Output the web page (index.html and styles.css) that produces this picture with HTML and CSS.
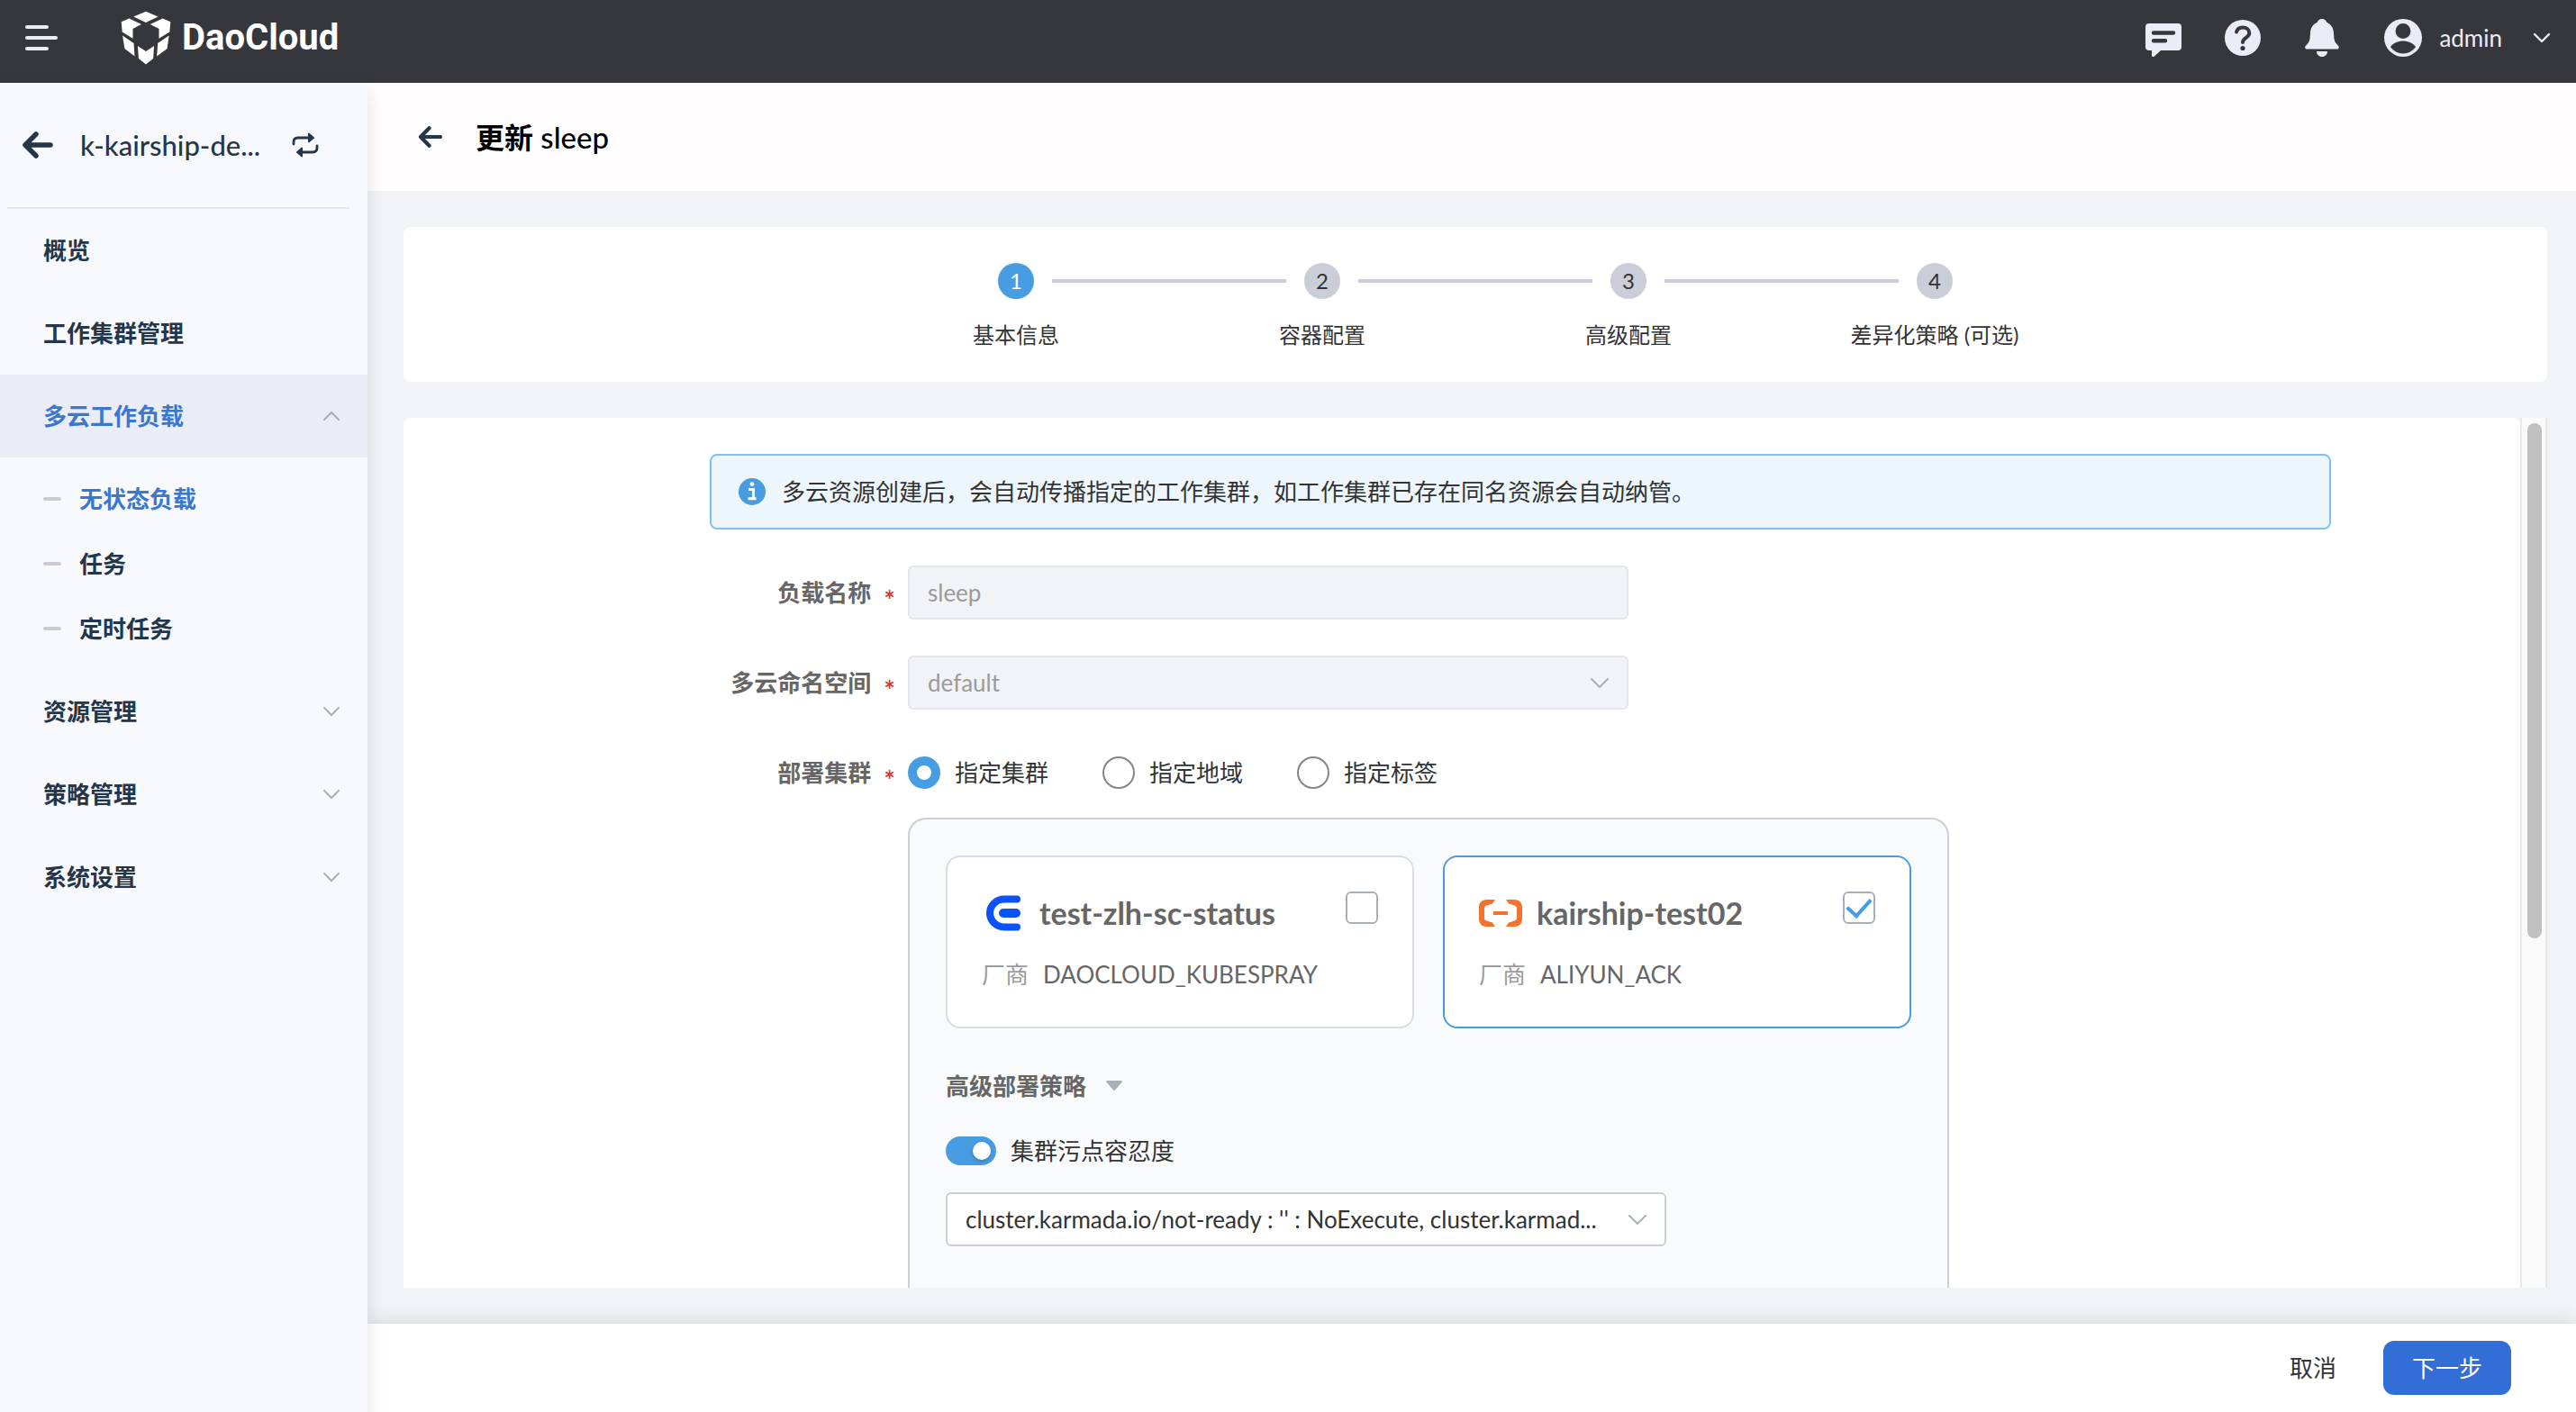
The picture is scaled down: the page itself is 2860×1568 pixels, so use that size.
FILE: index.html
```html
<!DOCTYPE html>
<html lang="zh-CN">

<head>
    <meta charset="UTF-8" />
    <meta name="viewport" content="width=device-width, initial-scale=1.0" />
    <title>更新 sleep - DaoCloud</title>
    <link rel="stylesheet" href="styles.css">
</head>

<body>
    <header class="topbar">
        <button type="button" class="icon-btn menu-btn" aria-label="菜单">
            <svg width="36" height="28" viewBox="0 0 36 28" fill="#eaedf5">
                <rect width="26" height="4" rx="2" />
                <rect y="12" width="36" height="4" rx="2" />
                <rect y="24" width="26" height="4" rx="2" />
            </svg>
        </button>
        <a class="logo" href="#">
            <svg width="56" height="60" viewBox="402 36 166 177" fill="#fff">
                <path d="M485 38l40 17-40 19-41-19z" />
                <path d="M404 72l26-11 40 19-28 15v32l-35-22z" />
                <path d="M566 72l-26-11-41 19 29 15v32l35-22z" />
                <path d="M408 117l37 25 3 43-33-25z" />
                <path d="M561 117l-37 25-3 43 34-25z" />
                <path d="M458 151l27 18 27-18-3 42-24 19-24-19z" />
            </svg>
            <span>DaoCloud</span>
        </a>
        <div class="tools">
            <button type="button" class="icon-btn" aria-label="消息">
                <svg width="48" height="48" viewBox="0 0 48 48">
                    <path fill="#eaedf5" d="M8 8h32a4 4 0 0 1 4 4v22a4 4 0 0 1-4 4H21l-7 6.400c-1.500 1.200-3 .6-3-1V38H8a4 4 0 0 1-4-4V12a4 4 0 0 1 4-4z" />
                    <path stroke="#36373c" stroke-width="4.400" stroke-linecap="round" d="M13 18.500h22M13 27.200h13" />
                </svg>
            </button>
            <button type="button" class="icon-btn" aria-label="帮助">
                <svg width="48" height="48" viewBox="0 0 48 48">
                    <circle cx="24" cy="24" r="20" fill="#eaedf5" />
                    <path fill="none" stroke="#36373c" stroke-width="4" stroke-linecap="round" d="M17 17.500c1-3.500 4-5 7-5 4 0 7.300 2.300 7.300 6.300 0 5-7.300 5-7.300 10.200" />
                    <circle cx="24" cy="35.500" r="2.600" fill="#36373c" />
                </svg>
            </button>
            <button type="button" class="icon-btn" aria-label="通知">
                <svg width="48" height="48" viewBox="0 0 48 48" fill="#eaedf5">
                    <path d="M24 3c2.600 0 4.600 1.600 5.200 3.800 5 2.200 7.600 6.400 7.800 12.200.2 6 .8 9 2.600 11l2.600 3c1.300 1.600.5 3.500-1.500 3.500H7.300c-2 0-2.800-1.900-1.500-3.500l2.600-3c1.800-2 2.400-5 2.600-11 .2-5.800 2.800-10 7.800-12.200C19.400 4.600 21.400 3 24 3z" />
                    <path d="M18 39h12c0 3.600-2.600 6-6 6s-6-2.400-6-6z" />
                </svg>
            </button>
            <button type="button" class="icon-btn user">
                <svg width="48" height="48" viewBox="0 0 48 48">
                    <circle cx="24" cy="24" r="21" fill="#eaedf5" />
                    <circle cx="24" cy="16.500" r="8.400" fill="#36373c" />
                    <path fill="#36373c" d="M10 34c3-4.200 8.300-6.400 14-6.400S35 29.800 38 34c-3 4.600-8.300 7.400-14 7.400S13 38.600 10 34z" />
                </svg>
                <span>admin</span>
                <svg class="user-arrow" width="20" height="14" viewBox="0 0 20 14" fill="none" stroke="#eaedf5" stroke-width="2.400" stroke-linecap="round" stroke-linejoin="round">
                    <path d="M2 3l8 8 8-8" />
                </svg>
            </button>
        </div>
    </header>

    <div class="layout">
        <aside class="sidebar">
            <div class="workspace">
                <button type="button" class="icon-btn" aria-label="返回">
                    <svg width="34" height="30" viewBox="0 0 34 30" fill="none" stroke="#25364a" stroke-width="5.500" stroke-linecap="round" stroke-linejoin="round">
                        <path d="M15 3L3 15l12 12M4 15h27" />
                    </svg>
                </button>
                <span class="workspace-name">k-kairship-de...</span>
                <button type="button" class="icon-btn" aria-label="切换">
                    <svg width="30" height="28" viewBox="0 0 30 28" fill="none" stroke="#25364a" stroke-width="2.800" stroke-linecap="round">
                        <path d="M2 13v-2c0-3 1.500-5 5-5h12M28 15v2c0 3-1.500 5-5 5H11" />
                        <path fill="#25364a" stroke="none" d="M18 1.500c0-1 1-1.200 1.600-.6l5 4.300c.6.5.6 1.100 0 1.600l-5 4.300c-.6.600-1.600.4-1.600-.6zM12 17.500c0-1-1-1.200-1.600-.6l-5 4.300c-.6.500-.6 1.100 0 1.600l5 4.300c.6.600 1.600.4 1.600-.6z" />
                    </svg>
                </button>
            </div>
            <nav class="menu">
                <a class="menu-item" href="#">概览</a>
                <a class="menu-item" href="#">工作集群管理</a>
                <button type="button" class="menu-item open" aria-expanded="true">多云工作负载
                    <svg class="chevron" viewBox="0 0 20 12"><path d="M2 10l8-8 8 8" /></svg>
                </button>
                <div class="submenu">
                    <a class="active" href="#">无状态负载</a>
                    <a href="#">任务</a>
                    <a href="#">定时任务</a>
                </div>
                <button type="button" class="menu-item" aria-expanded="false">资源管理
                    <svg class="chevron" viewBox="0 0 20 12"><path d="M2 2l8 8 8-8" /></svg>
                </button>
                <button type="button" class="menu-item" aria-expanded="false">策略管理
                    <svg class="chevron" viewBox="0 0 20 12"><path d="M2 2l8 8 8-8" /></svg>
                </button>
                <button type="button" class="menu-item" aria-expanded="false">系统设置
                    <svg class="chevron" viewBox="0 0 20 12"><path d="M2 2l8 8 8-8" /></svg>
                </button>
            </nav>
        </aside>

        <main class="main">
            <div class="page-head">
                <button type="button" class="icon-btn" aria-label="返回">
                    <svg width="28" height="24" viewBox="0 0 28 24" fill="none" stroke="#25364a" stroke-width="4.200" stroke-linecap="round" stroke-linejoin="round">
                        <path d="M12.500 2.200L3 12l9.500 9.800M3 12h22" />
                    </svg>
                </button>
                <h1><b>更新</b> sleep</h1>
            </div>

            <div class="content">
                <section class="card steps-card">
                    <ol class="steps">
                        <li class="current"><span class="dot">1</span><span class="step-name">基本信息</span></li>
                        <li><span class="dot">2</span><span class="step-name">容器配置</span></li>
                        <li><span class="dot">3</span><span class="step-name">高级配置</span></li>
                        <li><span class="dot">4</span><span class="step-name">差异化策略 (可选)</span></li>
                    </ol>
                </section>

                <section class="form-wrap">
                    <form class="card form">
                        <div class="alert">
                            <svg width="30" height="30" viewBox="0 0 30 30">
                                <circle cx="15" cy="15" r="15" fill="#479ce2" />
                                <circle cx="15" cy="6.600" r="2.400" fill="#fff" />
                                <path fill="none" stroke="#fff" stroke-width="3" d="M11 12.500h5.500v10M10.500 22.800h9" />
                            </svg>
                            <span>多云资源创建后，会自动传播指定的工作集群，如工作集群已存在同名资源会自动纳管。</span>
                        </div>

                        <div class="row">
                            <label for="name">负载名称<i>*</i></label>
                            <input class="control" id="name" type="text" value="sleep" disabled>
                        </div>

                        <div class="row">
                            <label for="ns">多云命名空间<i>*</i></label>
                            <div class="select">
                                <select class="control" id="ns" disabled>
                                    <option>default</option>
                                </select>
                                <svg class="select-arrow" viewBox="0 0 20 12"><path d="M1 2l9 9 9-9" /></svg>
                            </div>
                        </div>

                        <div class="row">
                            <span class="row-label" id="deploy">部署集群<i>*</i></span>
                            <div class="radios" role="radiogroup" aria-labelledby="deploy">
                                <label><input type="radio" name="target" checked>指定集群</label>
                                <label><input type="radio" name="target">指定地域</label>
                                <label><input type="radio" name="target">指定标签</label>
                            </div>
                        </div>

                        <div class="panel">
                            <div class="clusters">
                                <label class="cluster">
                                    <span class="cluster-head">
                                        <svg width="48" height="48" viewBox="0 0 48 48" fill="none" stroke="#0a52fa" stroke-linecap="round">
                                            <path stroke-width="8" d="M39 8.500H25c-9 0-16 7-16 15.500s7 15.500 16 15.500h14" />
                                            <path stroke-width="10" d="M24 24h14" />
                                        </svg>
                                        <b>test-zlh-sc-status</b>
                                        <input type="checkbox">
                                    </span>
                                    <span class="vendor"><em>厂商</em>DAOCLOUD_KUBESPRAY</span>
                                </label>
                                <label class="cluster selected">
                                    <span class="cluster-head">
                                        <svg width="48" height="48" viewBox="0 0 48 48" fill="#f0732f">
                                            <path d="M18 9l-3 4.500-6.500 2C7 16 6 17 6 18.500v11c0 1.500 1 2.500 2.500 3l6.500 2 3 4.500H8.500C3.500 39 0 35.500 0 30.500v-13C0 12.500 3.500 9 8.500 9z" />
                                            <path d="M30 9l3 4.500 6.500 2c1.500.5 2.500 1.500 2.500 3v11c0 1.500-1 2.500-2.500 3l-6.500 2-3 4.500h9.500c5 0 8.500-3.500 8.500-8.500v-13C48 12.500 44.500 9 39.500 9z" />
                                            <rect x="16" y="22" width="16" height="4" />
                                        </svg>
                                        <b>kairship-test02</b>
                                        <input type="checkbox" checked>
                                    </span>
                                    <span class="vendor"><em>厂商</em>ALIYUN_ACK</span>
                                </label>
                            </div>

                            <button type="button" class="advanced">高级部署策略
                                <svg width="18" height="12" viewBox="0 0 18 12" fill="#a9afb6">
                                    <path d="M1.500 0h15c1.200 0 1.700 1.100.9 2L10 10.500c-.6.700-1.400.7-2 0L.6 2C-.2 1.100.3 0 1.500 0z" />
                                </svg>
                            </button>

                            <label class="toleration"><input type="checkbox" role="switch" checked>集群污点容忍度</label>

                            <div class="select">
                                <select class="control" aria-label="集群污点容忍度">
                                    <option>cluster.karmada.io/not-ready : '' : NoExecute, cluster.karmad...</option>
                                </select>
                                <svg class="select-arrow" viewBox="0 0 20 12"><path d="M1 2l9 9 9-9" /></svg>
                            </div>
                        </div>
                    </form>
                    <div class="scrollbar"><div class="thumb"></div></div>
                </section>
            </div>

            <footer class="actions">
                <button type="button" class="btn">取消</button>
                <button type="button" class="btn btn-primary">下一步</button>
            </footer>
        </main>
    </div>
</body>

</html>
```
FILE: styles.css
```css
:root{
    --dark: #36373c;
    --navy: #25364a;
    --blue: #479ce2;
    --primary: #336dd6;
    --text: #333;
    --label: #666;
    --muted: #9b9b9b;
    --line: #cbced9;
    --bg: #f1f3f7;
}

*{
    box-sizing: border-box;
    margin: 0;
    padding: 0;
}
body{
    display: flex;
    flex-direction: column;
    height: 100vh;
    overflow: hidden;
    font-family: Lato, "Noto Sans CJK SC", sans-serif;
    font-size: 26px;
    line-height: 40px;
    color: var(--text);
    background-color: var(--bg);
}
button,
input,
select{
    font: inherit;
    color: inherit;
}
button{
    border: none;
    background: none;
    cursor: pointer;
}
a{
    color: inherit;
    text-decoration: none;
}
svg{
    display: block;
    flex: none;
}
.icon-btn{
    display: flex;
    align-items: center;
}

/* top bar */
.topbar{
    display: flex;
    align-items: center;
    flex: none;
    height: 92px;
    padding: 0 28px 8px;
    background-color: var(--dark);
    color: #eaedf5;
}
.logo{
    display: flex;
    align-items: center;
    gap: 12px;
    margin-left: 70px;
    color: #fff;
    font-family: Roboto, sans-serif;
    font-size: 40px;
    font-weight: bold;
}
.tools{
    display: flex;
    gap: 40px;
    margin-left: auto;
}
.user{
    gap: 16px;
    margin-left: 2px;
}
.user-arrow{
    margin-left: 18px;
}

/* sidebar */
.layout{
    display: flex;
    flex: 1;
    min-height: 0;
}
.sidebar{
    position: relative;
    z-index: 1;
    flex: none;
    width: 408px;
    background-color: #f7f9fd;
    color: var(--navy);
    box-shadow: 0 8px 20px rgba(0, 0, 0, 0.12);
}
.workspace{
    display: flex;
    align-items: center;
    height: 140px;
    margin: 0 20px 0 8px;
    padding: 0 34px 0 17px;
    border-bottom: 2px solid #e4e6ea;
}
.workspace-name{
    flex: 1;
    padding-left: 30px;
    font-size: 31px;
    font-weight: 500;
}
.menu,
.menu-item{
    font-weight: 600;
}
.menu-item{
    display: flex;
    align-items: center;
    justify-content: space-between;
    width: 100%;
    height: 92px;
    padding: 0 30px 0 48px;
}
.menu-item.open{
    background-color: #eaedf5;
    color: #3b77d0;
}
.chevron{
    width: 20px;
    height: 12px;
    fill: none;
    stroke: #a9afb6;
    stroke-width: 2;
    stroke-linecap: round;
}
.submenu{
    padding: 10px 0;
}
.submenu a{
    display: flex;
    align-items: center;
    gap: 20px;
    height: 72px;
    padding-left: 48px;
}
.submenu a::before{
    content: "";
    width: 20px;
    height: 4px;
    border-radius: 2px;
    background-color: #cbccd6;
}
.submenu .active{
    color: #3b77d0;
}

/* page */
.main{
    display: flex;
    flex: 1;
    flex-direction: column;
    min-width: 0;
}
.page-head{
    display: flex;
    align-items: center;
    flex: none;
    gap: 36px;
    height: 120px;
    padding-left: 56px;
    background-color: #fffdfe;
    color: #000;
}
.page-head h1{
    font-size: 33px;
    font-weight: 500;
}
.page-head b{
    font-size: 32px;
    font-weight: 600;
}
.content{
    display: flex;
    flex: 1;
    flex-direction: column;
    gap: 40px;
    min-height: 0;
    padding: 40px 32px 40px 40px;
}
.card{
    border-radius: 8px;
    background-color: #fff;
}

/* steps */
.steps-card{
    flex: none;
    padding: 40px 0 32px;
}
.steps{
    display: grid;
    grid-template-columns: repeat(4, 1fr);
    max-width: 1360px;
    margin: 0 auto;
    list-style: none;
}
.steps li{
    display: grid;
    grid-template-columns: 1fr 40px 1fr;
    align-items: center;
    row-gap: 20px;
    text-align: center;
    font-size: 24px;
}
.steps li::before,
.steps li::after{
    content: "";
    grid-row: 1;
    height: 4px;
    background-color: #cbced9;
}
.steps li::before{
    grid-column: 1;
    margin-right: 20px;
}
.steps li::after{
    grid-column: 3;
    margin-left: 20px;
}
.steps li:first-child::before,
.steps li:last-child::after{
    visibility: hidden;
}
.dot{
    grid-row: 1;
    grid-column: 2;
    height: 40px;
    border-radius: 50%;
    background-color: #cbced9;
}
.current .dot{
    background-color: var(--blue);
    color: #fff;
}
.step-name{
    grid-row: 2;
    grid-column: 1 / -1;
}

/* form */
.form-wrap{
    display: flex;
    flex: 1;
    min-height: 0;
}
.form{
    flex: 1;
    padding: 40px 210px 0 340px;
    overflow: hidden;
    border-bottom-left-radius: 0;
    border-bottom-right-radius: 0;
}
.scrollbar{
    width: 30px;
    padding: 6px;
    border: solid #e8e8e8;
    border-width: 0 2px;
    background-color: #fafafa;
}
.thumb{
    width: 16px;
    height: 60%;
    border-radius: 8px;
    background-color: #c1c1c1;
}
.alert{
    display: flex;
    align-items: center;
    gap: 18px;
    height: 84px;
    padding: 0 30px;
    border: 2px solid #84c0ec;
    border-radius: 8px;
    background-color: #edf6fd;
}
.row{
    display: flex;
    align-items: center;
    height: 60px;
    margin-top: 40px;
}
.row > label,
.row-label{
    display: flex;
    align-items: center;
    justify-content: flex-end;
    gap: 14px;
    width: 220px;
    padding-right: 14px;
    color: var(--label);
    font-weight: 600;
}
.row i{
    padding-top: 16px;
    color: #d93026;
    font-size: 30px;
    font-style: normal;
}
.control{
    width: 100%;
    max-width: 800px;
    height: 60px;
    padding: 0 64px 0 20px;
    border: 2px solid var(--line);
    border-radius: 6px;
    appearance: none;
    background-color: #fff;
    opacity: 1;
}
.control:disabled{
    border-color: #e4e6ed;
    background-color: var(--bg);
    color: var(--muted);
}
.select{
    position: relative;
    width: 800px;
}
.select-arrow{
    position: absolute;
    top: 24px;
    right: 22px;
    width: 20px;
    height: 12px;
    fill: none;
    stroke: #a9afb6;
    stroke-width: 2;
    stroke-linecap: round;
    pointer-events: none;
}
.radios{
    display: flex;
    gap: 60px;
}
.radios label{
    display: flex;
    align-items: center;
    gap: 16px;
}
.radios input{
    width: 36px;
    height: 36px;
    border: 2px solid #80858f;
    border-radius: 50%;
    appearance: none;
}
.radios input:checked{
    border: 10px solid var(--blue);
}

/* cluster panel */
.panel{
    width: 1156px;
    margin: 20px 0 0 220px;
    padding: 40px 40px 80px;
    border: 2px solid var(--line);
    border-radius: 20px;
    background-color: #f9fafc;
}
.clusters{
    display: grid;
    grid-template-columns: 1fr 1fr;
    gap: 32px;
}
.cluster{
    padding: 38px;
    border: 2px solid #d8dbe8;
    border-radius: 16px;
    background-color: #fff;
    color: var(--label);
}
.cluster.selected{
    border-color: var(--blue);
}
.cluster-head{
    display: flex;
    align-items: center;
    gap: 16px;
    height: 48px;
    margin-bottom: 24px;
    font-size: 34px;
}
.cluster-head input{
    display: grid;
    place-content: center;
    align-self: flex-start;
    width: 36px;
    height: 36px;
    margin-left: auto;
    border: 2px solid #a9afb6;
    border-radius: 6px;
    appearance: none;
}
.cluster-head input:checked::before{
    content: "";
    width: 12px;
    height: 22px;
    margin-bottom: 6px;
    border: solid var(--blue);
    border-width: 0 4px 4px 0;
    transform: rotate(42deg);
}
.vendor{
    display: flex;
    gap: 16px;
}
.vendor em{
    color: var(--muted);
    font-style: normal;
}
.advanced{
    display: flex;
    align-items: center;
    gap: 22px;
    margin-top: 44px;
    color: var(--label);
    font-weight: 600;
}
.toleration{
    display: flex;
    align-items: center;
    gap: 16px;
    margin: 32px 0 26px;
}
.toleration input{
    display: flex;
    align-items: center;
    width: 56px;
    height: 32px;
    border-radius: 16px;
    appearance: none;
    background-color: var(--line);
}
.toleration input::before{
    content: "";
    width: 20px;
    height: 20px;
    margin-left: 6px;
    border-radius: 50%;
    background-color: #fff;
    box-shadow: 0 2px 4px rgba(0, 0, 0, 0.2);
}
.toleration input:checked{
    background-color: var(--blue);
}
.toleration input:checked::before{
    margin-left: 30px;
}

/* bottom actions */
.actions{
    display: flex;
    align-items: center;
    justify-content: flex-end;
    flex: none;
    gap: 20px;
    height: 98px;
    padding-right: 72px;
    background-color: #fff;
    box-shadow: 0 0 20px rgba(0, 0, 0, 0.15);
}
.btn{
    height: 60px;
    padding: 0 32px;
    border-radius: 12px;
}
.btn-primary{
    background-color: var(--primary);
    color: #fff;
}
```
